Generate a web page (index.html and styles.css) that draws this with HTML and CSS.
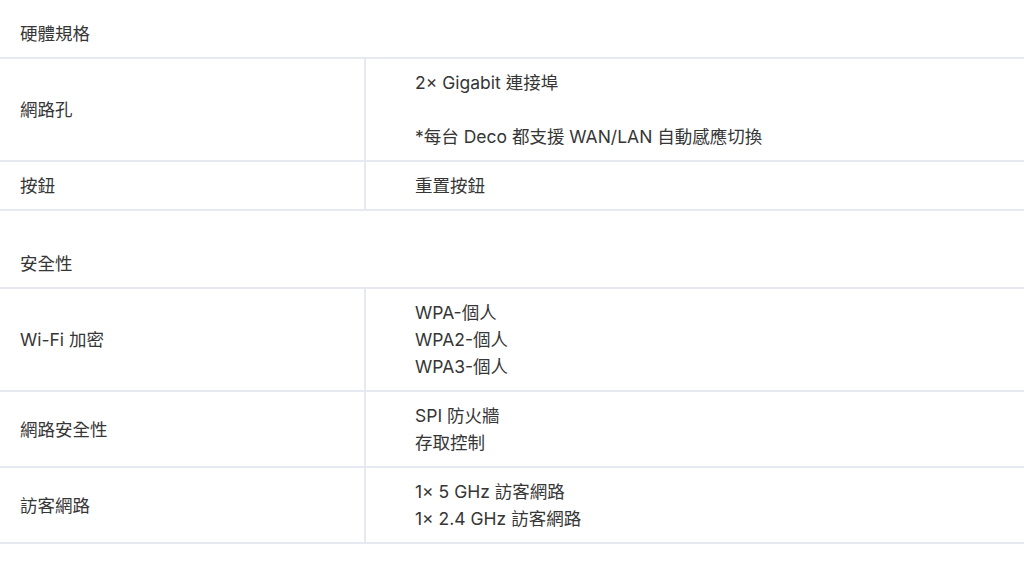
FILE: index.html
```html
<!DOCTYPE html>
<html lang="zh-Hant">
<head>
<meta charset="utf-8">
<title>規格</title>
<link rel="stylesheet" href="styles.css">
</head>
<body>
<section class="spec-section">
  <div class="spec-title">硬體規格</div>
  <div class="spec-row">
    <div class="spec-label">網路孔</div>
    <div class="spec-value">2× Gigabit 連接埠<br><br>*每台 Deco 都支援 WAN/LAN 自動感應切換</div>
  </div>
  <div class="spec-row">
    <div class="spec-label">按鈕</div>
    <div class="spec-value">重置按鈕</div>
  </div>
</section>
<section class="spec-section">
  <div class="spec-title">安全性</div>
  <div class="spec-row">
    <div class="spec-label">Wi-Fi 加密</div>
    <div class="spec-value">WPA-個人<br>WPA2-個人<br>WPA3-個人</div>
  </div>
  <div class="spec-row">
    <div class="spec-label">網路安全性</div>
    <div class="spec-value">SPI 防火牆<br>存取控制</div>
  </div>
  <div class="spec-row">
    <div class="spec-label">訪客網路</div>
    <div class="spec-value">1× 5 GHz 訪客網路<br>1× 2.4 GHz 訪客網路</div>
  </div>
</section>
</body>
</html>
```

FILE: styles.css
```css
html, body {
  margin: 0;
  padding: 0;
  background: #ffffff;
}

body {
  font-family: Inter, "Noto Sans CJK TC", sans-serif;
  font-size: 17.5px;
  line-height: 27px;
  color: #363636;
}

.spec-section + .spec-section {
  margin-top: 19px;
}

.spec-title {
  padding: 20px 20px 10px;
  border-bottom: 2px solid #e6e9ef;
}

.spec-row {
  display: grid;
  grid-template-columns: 366px 1fr;
  border-bottom: 2px solid #e6e9ef;
}

.spec-label {
  display: flex;
  align-items: center;
  padding: 10px 20px;
  border-right: 2px solid #e6e9ef;
}

.spec-value {
  padding: 10px 20px 10px 49px;
}
```
